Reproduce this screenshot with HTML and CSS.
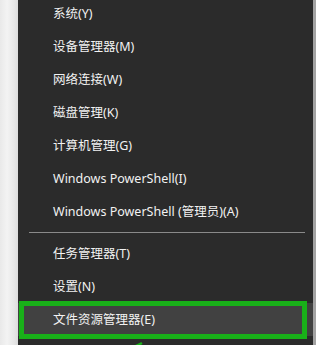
FILE: index.html
```html
<!DOCTYPE html>
<html lang="zh-CN">
<head>
<meta charset="utf-8">
<link rel="stylesheet" href="styles.css">
</head>
<body>
<div class="screen">
  <div class="desk"></div>
  <div class="menu">
    <ul class="list">
      <li class="item">系统(Y)</li>
      <li class="item">设备管理器(M)</li>
      <li class="item">网络连接(W)</li>
      <li class="item">磁盘管理(K)</li>
      <li class="item">计算机管理(G)</li>
      <li class="item">Windows PowerShell(I)</li>
      <li class="item">Windows PowerShell (管理员)(A)</li>
      <li class="sep"></li>
      <li class="item">任务管理器(T)</li>
      <li class="item">设置(N)</li>
      <li class="item hot">文件资源管理器(E)
        <svg class="arrow" width="20" height="10" viewBox="0 0 20 10"><path d="M2 9 L12 4" stroke="#18b018" stroke-width="2.5" fill="none"/></svg>
      </li>
    </ul>
  </div>
  <div class="edge"></div>
</div>
</body>
</html>
```
FILE: styles.css
```css
html, body {
  margin: 0;
  padding: 0;
  background: #2b2b2b;
}
.screen {
  display: flex;
  width: 316px;
  height: 345px;
  overflow: hidden;
}
.desk {
  width: 18px;
  flex: none;
  background: linear-gradient(90deg, #e9e9e9 0, #f3f3f3 40%, #e6e6e6 80%, #dcdcdc 100%);
}
.menu {
  flex: 1;
  background: #2b2b2b;
}
.edge {
  width: 3px;
  flex: none;
  background: #a3a3a3;
}
.list {
  list-style: none;
  margin: -3px 0 0 0;
  padding: 0;
}
.item {
  position: relative;
  height: 33px;
  line-height: 33px;
  padding-left: 35px;
  color: #f2f2f2;
  font-family: "Noto Sans", "Noto Sans CJK SC", sans-serif;
  font-size: 12.5px;
  white-space: nowrap;
}
.sep {
  height: 9px;
  display: flex;
  align-items: center;
  padding: 0 8px 0 11px;
}
.sep::before {
  content: "";
  flex: 1;
  height: 1px;
  background: #8a8a8a;
}
.hot {
  background: #414141;
}
.hot::after {
  content: "";
  position: absolute;
  left: 1px;
  right: 6px;
  top: -2px;
  bottom: -3px;
  border: 5px solid #19b019;
}
.arrow {
  position: absolute;
  left: 112px;
  top: 36px;
}
```
